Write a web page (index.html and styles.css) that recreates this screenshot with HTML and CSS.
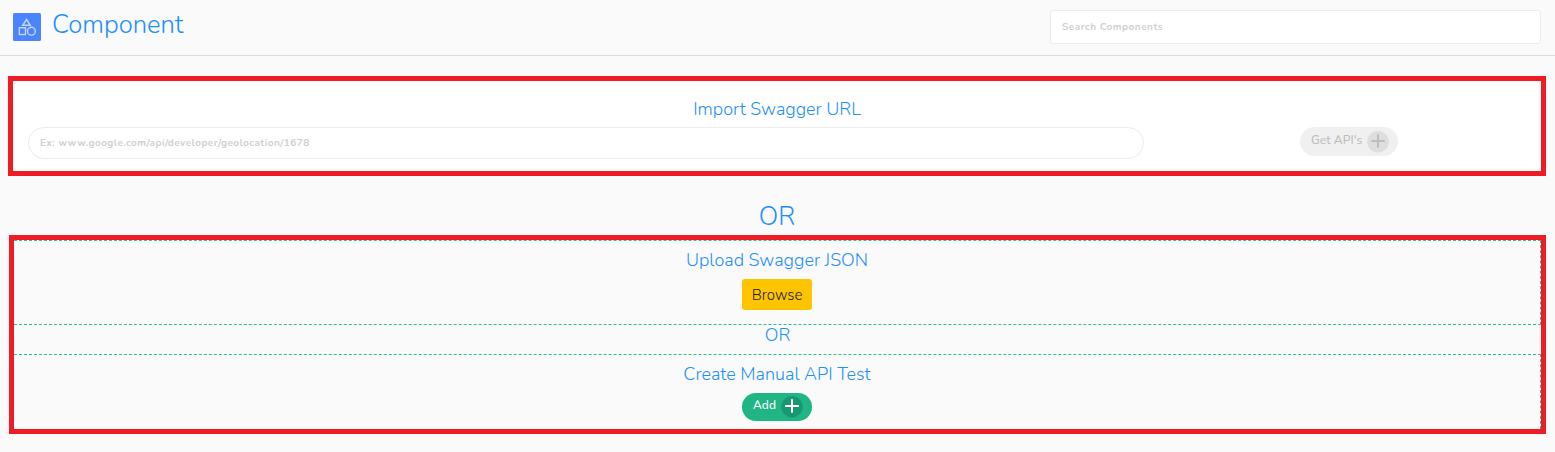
FILE: index.html
```html
<!DOCTYPE html>
<html lang="en">
<head>
<meta charset="utf-8">
<title>Component</title>
<link rel="stylesheet" href="styles.css">
</head>
<body>
<header class="header">
  <svg class="logo" viewBox="0 0 28 28">
    <rect width="28" height="28" rx="1.5" fill="#4c84ff"/>
    <g fill="none" stroke="#c3d5ff" stroke-width="1.4">
      <path d="M13.5 6.5 L17.3 12.3 H9.7 Z"/>
      <rect x="6.3" y="14.7" width="6.2" height="6.8"/>
      <circle cx="18.4" cy="18.2" r="3.9"/>
    </g>
  </svg>
  <h1 class="title"><span>Component</span></h1>
  <input class="search" type="text" placeholder="Search Components">
</header>
<main class="main">
  <section class="import">
    <h2 class="heading import-heading">Import Swagger URL</h2>
    <div class="import-row">
      <input class="url" type="text" placeholder="Ex: www.google.com/api/developer/geolocation/1678">
      <div class="import-action">
        <button class="pill pill-disabled" type="button" disabled>
          <span class="pill-label">Get API's</span>
          <svg class="plus" viewBox="0 0 22 22"><circle cx="11" cy="10.7" r="10.8" fill="#dedede"/><path d="M4.3 10H17.8M11 3.2V16.8" stroke="#bdbdbd" stroke-width="2"/></svg>
        </button>
      </div>
    </div>
  </section>
  <div class="or-large">OR</div>
  <section class="options">
    <div class="option upload">
      <h2 class="heading upload-heading">Upload Swagger JSON</h2>
      <button class="browse" type="button">Browse</button>
    </div>
    <div class="or-small">OR</div>
    <div class="option manual">
      <h2 class="heading manual-heading">Create Manual API Test</h2>
      <button class="pill pill-add" type="button">
        <span class="pill-label">Add</span>
        <svg class="plus" viewBox="0 0 22 22"><circle cx="11" cy="10.7" r="10.7" fill="#199772"/><path d="M4.2 10H17.8M11 3.2V16.8" stroke="#fff" stroke-width="2"/></svg>
      </button>
    </div>
  </section>
</main>
</body>
</html>
```
FILE: styles.css
```css
* { box-sizing: border-box; }
body { margin: 0; height: 452px; overflow: hidden; background: #fafafa; font-family: Nunito, Lato, sans-serif; color: #1e8fff; font-weight: 300; }
h1, h2 { margin: 0; font-weight: 300; }
input, button { font-family: inherit; margin: 0; }
button { border: 0; padding: 0; }
.header { display: flex; height: 56px; padding: 10px 14px 0 13px; border-bottom: 1px solid #dcdcdc; }
.logo { width: 28px; height: 28px; margin-top: 3px; }
.title { margin-left: 11px; font-size: 25.6px; line-height: 30px; }
.search { width: 491px; height: 34px; margin-left: auto; padding: 0 11px; border: 1px solid #ececec; border-radius: 3px; background: #fff; font-size: 10px; font-weight: 700; letter-spacing: 0.48px; }
::placeholder { color: #d0d0d0; opacity: 1; }
.main { padding: 20px 9px 0 8px; }
.import { height: 100px; padding: 16px 15px 0; border: 5px solid #ee1c25; background: #fff; }
.heading { font-size: 18px; line-height: 24px; text-align: center; white-space: nowrap; }
.import-row { display: flex; margin-top: 6px; }
.url { width: 1116px; height: 32px; padding: 0 11px; border: 1px solid #ececec; border-radius: 16px; background: #fff; font-size: 10px; font-weight: 700; letter-spacing: 0.45px; }
.import-action { margin-left: 156px; }
.pill { display: flex; height: 29px; border-radius: 15px; font-size: 12px; font-weight: 500; letter-spacing: 0.07px; white-space: nowrap; }
.pill-label { line-height: 26px; }
.plus { width: 22px; height: 22px; margin: 4px 9px 0 auto; }
.pill-disabled { width: 98px; padding-left: 11px; background: #f0f0f0; color: #bdbdbd; }
.or-large { height: 59px; padding-top: 26px; font-size: 25.6px; line-height: 30px; text-align: center; }
.options { height: 199px; margin-left: 1px; border: 5px solid #ee1c25; }
.option { display: flex; flex-direction: column; align-items: center; border-top: 1px dashed #2fc191; border-right: 1px dashed #2fc191; }
.upload { height: 85px; padding-top: 7px; border-bottom: 1px dashed #2fc191; }
.browse { width: 70px; height: 31px; margin-top: 7px; border-radius: 3px; background: #ffc400; color: #222; font-size: 15px; font-weight: 300; line-height: 33px; }
.or-small { height: 29px; font-size: 18px; line-height: 20px; text-align: center; }
.manual { height: 75px; padding-top: 7px; }
.pill-add { width: 70px; height: 28px; margin-top: 7px; padding-left: 11px; background: #1fb585; color: #fff; }
.pill-add .pill-label { line-height: 25px; }
.pill-add .plus { margin-top: 3px; }
```
